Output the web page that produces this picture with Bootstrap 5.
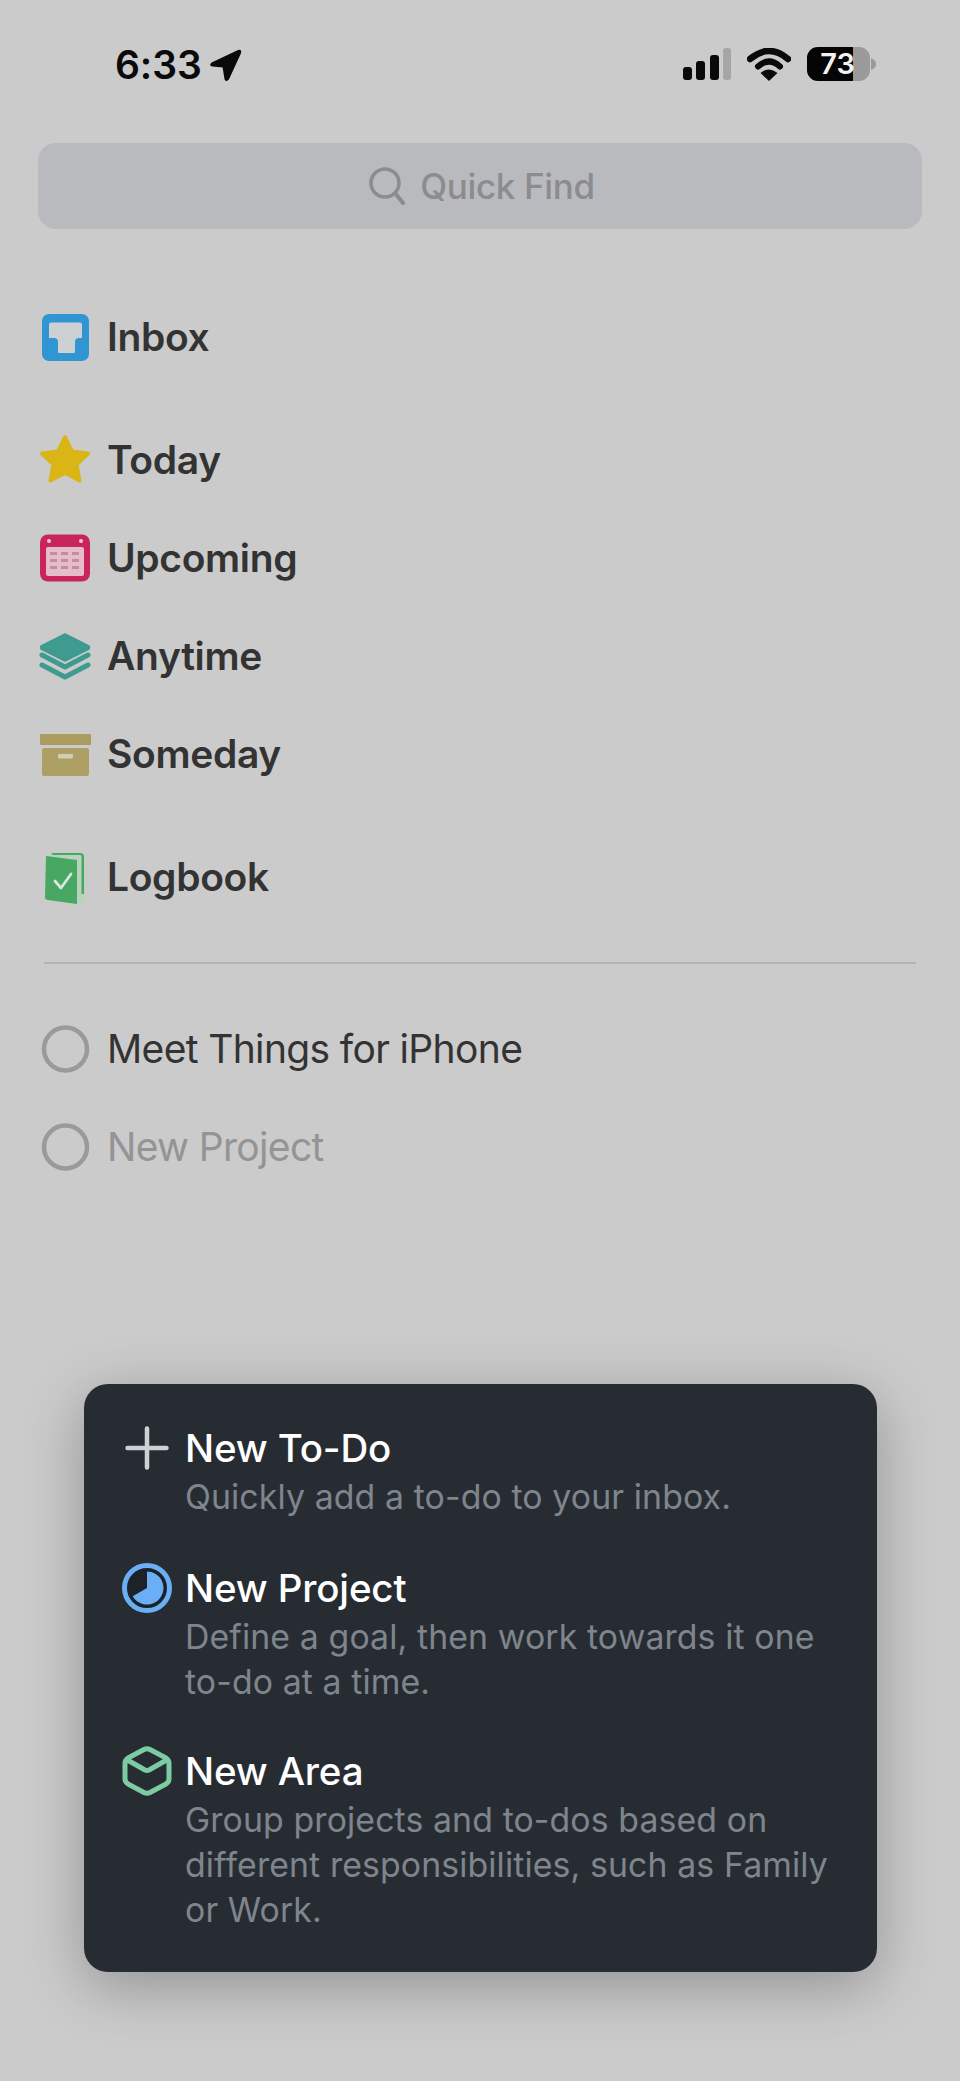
<!DOCTYPE html>
<html lang="en">
<head>
<meta charset="utf-8">
<title>Things</title>
<link href="https://cdn.jsdelivr.net/npm/bootstrap@5.3.0/dist/css/bootstrap.min.css" rel="stylesheet">
<style>
html,body{margin:0;background:#cbcbcb;}
body{font-family:Inter,"Liberation Sans",sans-serif;color:#2f2f2f;}
.phone-screen{position:relative;width:960px;height:2081px;background:#cbcbcb;overflow:hidden;}
.status-strip{height:143px;padding:47px 84px 0 115px;align-items:flex-start;}
.clock{font-size:39px;font-weight:600;line-height:36px;color:#0a0a0a;letter-spacing:-.1px;margin-right:6px;}
.batt{position:relative;width:63px;height:34px;border-radius:11px;background:#9a9a9a;overflow:hidden;color:#f2f2f2;font-size:29px;font-weight:600;line-height:34px;text-align:center;}
.batt-fill{position:absolute;left:0;top:0;bottom:0;width:46px;background:#050505;}
.batt-num{position:relative;left:-1px;}
.find-box{margin:0 38px;height:86px;padding-left:4px;border-radius:18px;background:#b9babd;color:#8b8c8f;font-size:35px;font-weight:500;letter-spacing:-.35px;}
.find-glyph{margin-right:15px;}
.nav-block{margin-top:59px;}
.row-line{height:98px;padding-left:35px;}
.row-line svg{flex:none;}
.row-label{margin-left:12px;font-size:39px;font-weight:600;letter-spacing:-.35px;color:#333;line-height:50px;}
.row-plain{font-weight:400;letter-spacing:-.65px;}
.row-dim{color:#949494;}
.block-gap{margin-top:25px;}
.block-gap2{margin-top:25px;}
.sep{height:2px;margin:36px 44px 36px;background:#b4b4b4;}
.pop-menu{position:absolute;left:84px;top:1384px;width:793px;height:588px;padding:38px 30px 0 38px;background:#272c33;border-radius:24px;box-shadow:0 14px 60px rgba(0,0,0,.28);}
.pop-second{margin-top:43px;}
.pop-third{margin-top:41px;}
.pop-icon{flex:none;width:50px;height:50px;margin-top:1px;margin-right:13px;}
.pop-title{font-size:38.500px;font-weight:450;line-height:52px;color:#fff;letter-spacing:-.15px;}
.pop-desc{font-size:33.800px;line-height:45px;color:#7f858d;letter-spacing:.12px;}
</style>
</head>
<body>
<div class="phone-screen">
  <div class="status-strip d-flex justify-content-between">
    <div class="d-flex align-items-center">
      <span class="clock">6:33</span>
      <svg width="34" height="36" viewBox="0 0 34 36"><path d="M30.500 4 L4 16.500 Q2 18 4.500 18.500 L15.500 19.500 L17.500 32 Q18.500 34 20 32 L32 6 Q33 3 30.500 4Z" fill="#0a0a0a" stroke="#0a0a0a" stroke-width="2" stroke-linejoin="round"/></svg>
    </div>
    <div class="d-flex align-items-center">
      <svg width="48" height="32" viewBox="0 0 48 32" class="me-3">
        <rect x="0" y="19" width="9" height="13" rx="3" fill="#0a0a0a"/>
        <rect x="13" y="13" width="9" height="19" rx="3" fill="#0a0a0a"/>
        <rect x="27" y="7" width="9" height="25" rx="3" fill="#0a0a0a"/>
        <rect x="40" y="0" width="8" height="32" rx="3" fill="#a6a6a6"/>
      </svg>
      <svg width="44" height="33" viewBox="0 0 44 33" class="me-3">
        <path d="M3 11 Q22 -5 41 11" fill="none" stroke="#0a0a0a" stroke-width="6.500" stroke-linecap="round"/>
        <path d="M11 18.500 Q22 8.500 33 18.500" fill="none" stroke="#0a0a0a" stroke-width="6" stroke-linecap="round"/>
        <path d="M22 33 L13.500 25 Q22 18 30.500 25Z" fill="#0a0a0a"/>
      </svg>
      <div class="batt"><div class="batt-fill"></div><span class="batt-num">73</span></div>
      <svg width="6" height="12" viewBox="0 0 6 12" class="ms-0"><path d="M1 0 Q6 2 6 6 Q6 10 1 12Z" fill="#9a9a9a"/></svg>
    </div>
  </div>

  <div class="find-box d-flex align-items-center justify-content-center">
    <svg width="36" height="40" viewBox="0 0 36 40" class="find-glyph"><circle cx="16" cy="17" r="14" fill="none" stroke="#8b8c8f" stroke-width="3.500"/><path d="M26 27 L34 37" stroke="#8b8c8f" stroke-width="4" stroke-linecap="round"/></svg>
    <span>Quick Find</span>
  </div>

  <div class="nav-block">
    <div class="row-line d-flex align-items-center">
      <svg width="60" height="60" viewBox="0 0 60 60">
        <rect x="7" y="7" width="47" height="47" rx="7" fill="#2f96d1"/>
        <path d="M16 15.500 H45 Q47 15.500 47 17.500 V31 H44 Q40 31 40 35 V45 Q40 46 39 46 H24 Q23 46 23 45 V35 Q23 31 19 31 H14 V17.500 Q14 15.500 16 15.500Z" fill="#cdd1d4"/>
      </svg>
      <span class="row-label">Inbox</span>
    </div>
  </div>
  <div class="block-gap">
    <div class="row-line d-flex align-items-center">
      <svg width="60" height="60" viewBox="0 0 60 60"><path d="M30 7 L37 21.500 L53 23.500 L41.500 34.500 L44.500 50.500 L30 42.700 L15.500 50.500 L18.500 34.500 L7 23.500 L23 21.500Z" fill="#dab516" stroke="#dab516" stroke-width="4" stroke-linejoin="round"/></svg>
      <span class="row-label">Today</span>
    </div>
    <div class="row-line d-flex align-items-center">
      <svg width="60" height="60" viewBox="0 0 60 60">
        <rect x="5" y="6.500" width="50" height="47" rx="8" fill="#c9245b"/>
        <rect x="11" y="19" width="38" height="29" rx="2" fill="#e3bdca"/>
        <circle cx="14" cy="13" r="2" fill="#f0c9d6"/><circle cx="46" cy="13" r="2" fill="#f0c9d6"/>
        <g fill="#c88aa1">
          <rect x="15" y="24" width="7" height="3"/><rect x="26" y="24" width="7" height="3"/><rect x="37" y="24" width="7" height="3"/>
          <rect x="15" y="31" width="7" height="3"/><rect x="26" y="31" width="7" height="3"/><rect x="37" y="31" width="7" height="3"/>
          <rect x="15" y="38" width="7" height="3"/><rect x="26" y="38" width="7" height="3"/><rect x="37" y="38" width="7" height="3"/>
        </g>
      </svg>
      <span class="row-label">Upcoming</span>
    </div>
    <div class="row-line d-flex align-items-center">
      <svg width="60" height="60" viewBox="0 0 60 60">
        <path d="M30 8 L54 20 Q55 21.500 54 23 L30 35 L6 23 Q5 21.500 6 20Z" fill="#3f9a8f" stroke="#3f9a8f" stroke-linejoin="round" stroke-width="1.500"/>
        <path d="M7 29 L30 41 L53 29" fill="none" stroke="#3f9a8f" stroke-width="5" stroke-linecap="round" stroke-linejoin="round"/>
        <path d="M7 39 L30 51 L53 39" fill="none" stroke="#3f9a8f" stroke-width="5" stroke-linecap="round" stroke-linejoin="round"/>
      </svg>
      <span class="row-label">Anytime</span>
    </div>
    <div class="row-line d-flex align-items-center">
      <svg width="60" height="60" viewBox="0 0 60 60">
        <rect x="5" y="10" width="51" height="11" rx="1" fill="#aa9c5f"/>
        <rect x="7" y="24" width="47" height="28" rx="2" fill="#ae9f65"/>
        <rect x="23" y="30" width="15" height="4.500" rx="1" fill="#d2ceb4"/>
      </svg>
      <span class="row-label">Someday</span>
    </div>
  </div>
  <div class="block-gap2">
    <div class="row-line d-flex align-items-center">
      <svg width="60" height="60" viewBox="0 0 60 60">
        <path d="M14 8 Q11 6 11 9 V51 Q11 53 14 54 L44 57 Q50 57 50 52 V10 Q50 5 46 5 H18Z" fill="#b9d3bf"/>
        <path d="M16 6 H45 Q49 6 49 10 V47 H46.500 V9 Q46.500 8 44 8 H18Z" fill="#47a763"/>
        <path d="M11 9 L42 13 V57 L13 53 Q10 53 10 50Z" fill="#47a763"/>
        <path d="M20 34 L26 41 L36 27" fill="none" stroke="#d7e9da" stroke-width="2.800" stroke-linecap="round" stroke-linejoin="round"/>
      </svg>
      <span class="row-label">Logbook</span>
    </div>
  </div>
  <div class="sep"></div>
  <div>
    <div class="row-line d-flex align-items-center">
      <svg width="60" height="60" viewBox="0 0 60 60"><circle cx="30.500" cy="30" r="21.500" fill="none" stroke="#9a9a9a" stroke-width="4.500"/></svg>
      <span class="row-label row-plain">Meet Things for iPhone</span>
    </div>
    <div class="row-line d-flex align-items-center">
      <svg width="60" height="60" viewBox="0 0 60 60"><circle cx="30.500" cy="30" r="21.500" fill="none" stroke="#9a9a9a" stroke-width="4.500"/></svg>
      <span class="row-label row-plain row-dim">New Project</span>
    </div>
  </div>

  <div class="pop-menu">
    <div class="d-flex">
      <svg class="pop-icon" viewBox="0 0 50 50"><path d="M25 5.500 V44.500 M5.500 25 H44.500" stroke="#cdd1d6" stroke-width="4.500" stroke-linecap="round"/></svg>
      <div>
        <div class="pop-title">New To-Do</div>
        <div class="pop-desc">Quickly add a to-do to your inbox.</div>
      </div>
    </div>
    <div class="pop-second d-flex">
      <svg class="pop-icon" viewBox="0 0 50 50">
        <circle cx="25" cy="25" r="22.500" fill="#1d2229" stroke="#6aaef5" stroke-width="5"/>
        <path d="M25 25 V8.500 A16.500 16.500 0 1 1 10.700 33.300Z" fill="#6aaef5"/>
      </svg>
      <div>
        <div class="pop-title">New Project</div>
        <div class="pop-desc">Define a goal, then work towards it one<br>to-do at a time.</div>
      </div>
    </div>
    <div class="pop-third d-flex">
      <svg class="pop-icon" viewBox="0 0 50 50">
        <path d="M22 3.500 Q25 2 28 3.500 L44 12 Q47 14 47 17 V33 Q47 36 44 38 L28 46.500 Q25 48 22 46.500 L6 38 Q3 36 3 33 V17 Q3 14 6 12Z M4.500 13.500 L23 24 Q25 25 27 24 L45.500 13.500" fill="none" stroke="#7ccba2" stroke-width="5" stroke-linejoin="round" stroke-linecap="round"/>
      </svg>
      <div>
        <div class="pop-title">New Area</div>
        <div class="pop-desc">Group projects and to-dos based on<br>different responsibilities, such as Family<br>or Work.</div>
      </div>
    </div>
  </div>
</div>
<script src="https://cdn.jsdelivr.net/npm/bootstrap@5.3.0/dist/js/bootstrap.bundle.min.js"></script>
</body>
</html>
